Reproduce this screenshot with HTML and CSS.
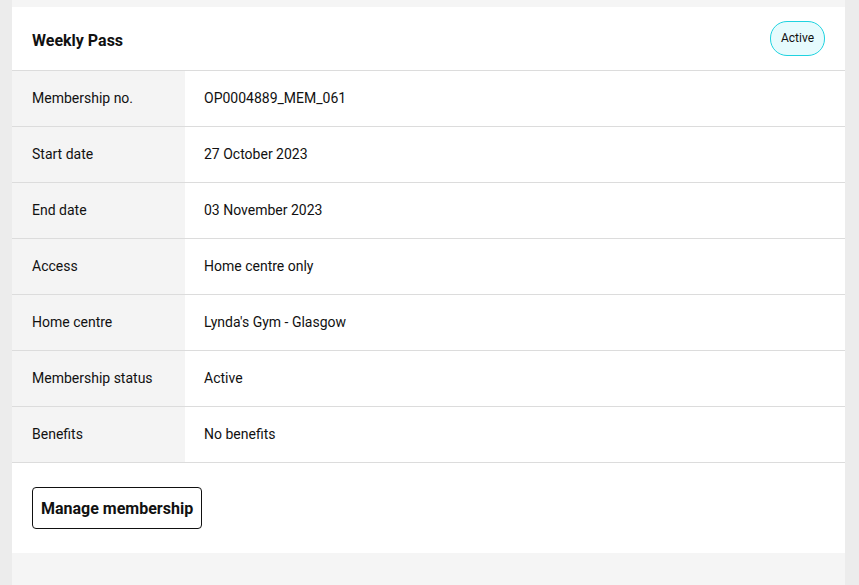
FILE: index.html
```html
<!DOCTYPE html>
<html lang="en">
<head>
  <meta charset="UTF-8">
  <meta name="viewport" content="width=device-width, initial-scale=1.0">
  <title>Membership - Weekly Pass</title>
  <link rel="stylesheet" href="styles.css">
</head>
<body>
  <div class="page">
    <div class="card">
      <div class="card-header">
        <div class="card-title">Weekly Pass</div>
        <span class="badge">Active</span>
      </div>

      <div class="details">
        <div class="row">
          <div class="label">Membership no.</div>
          <div class="value">OP0004889_MEM_061</div>
        </div>
        <div class="row">
          <div class="label">Start date</div>
          <div class="value">27 October 2023</div>
        </div>
        <div class="row">
          <div class="label">End date</div>
          <div class="value">03 November 2023</div>
        </div>
        <div class="row">
          <div class="label">Access</div>
          <div class="value">Home centre only</div>
        </div>
        <div class="row">
          <div class="label">Home centre</div>
          <div class="value">Lynda's Gym - Glasgow</div>
        </div>
        <div class="row">
          <div class="label">Membership status</div>
          <div class="value">Active</div>
        </div>
        <div class="row">
          <div class="label">Benefits</div>
          <div class="value">No benefits</div>
        </div>
      </div>

      <div class="card-footer">
        <button class="btn">Manage membership</button>
      </div>
    </div>
  </div>
</body>
</html>
```

FILE: styles.css
```css
body {
  font-family: Roboto, "Liberation Sans", Arial, sans-serif;
  background-color: #ececec;
  color: #111;
  margin: 0;
  padding: 0;
}
.page {
  margin: 0 14px 0 12px;
  min-height: 585px;
  padding-top: 7px;
  background-color: #f5f5f5;
}
.card {
  background-color: #fff;
}
.card-header {
  display: flex;
  align-items: center;
  justify-content: space-between;
  height: 63px;
  padding: 0 20px;
  border-bottom: 1px solid #dcdcdc;
}
.card-title {
  font-size: 16px;
  font-weight: 700;
  padding-top: 3px;
}
.badge {
  display: inline-flex;
  align-items: center;
  height: 33px;
  padding: 0 10px;
  margin-bottom: 1px;
  font-size: 12px;
  border: 1px solid #1fd3e0;
  border-radius: 17px;
  background-color: #e6fbfd;
}
.row {
  display: flex;
  height: 55px;
  border-bottom: 1px solid #dcdcdc;
  font-size: 14px;
}
.label {
  width: 153px;
  padding-left: 20px;
  padding-bottom: 1px;
  background-color: #f4f4f4;
  display: flex;
  align-items: center;
}
.value {
  padding-left: 19px;
  padding-bottom: 1px;
  display: flex;
  align-items: center;
}
.card-footer {
  padding: 24px 20px;
}
.btn {
  font-family: inherit;
  font-size: 16px;
  font-weight: 700;
  color: #111;
  background-color: #fff;
  border: 1px solid #111;
  border-radius: 4px;
  height: 42px;
  padding: 0 8px;
  cursor: pointer;
}
```
